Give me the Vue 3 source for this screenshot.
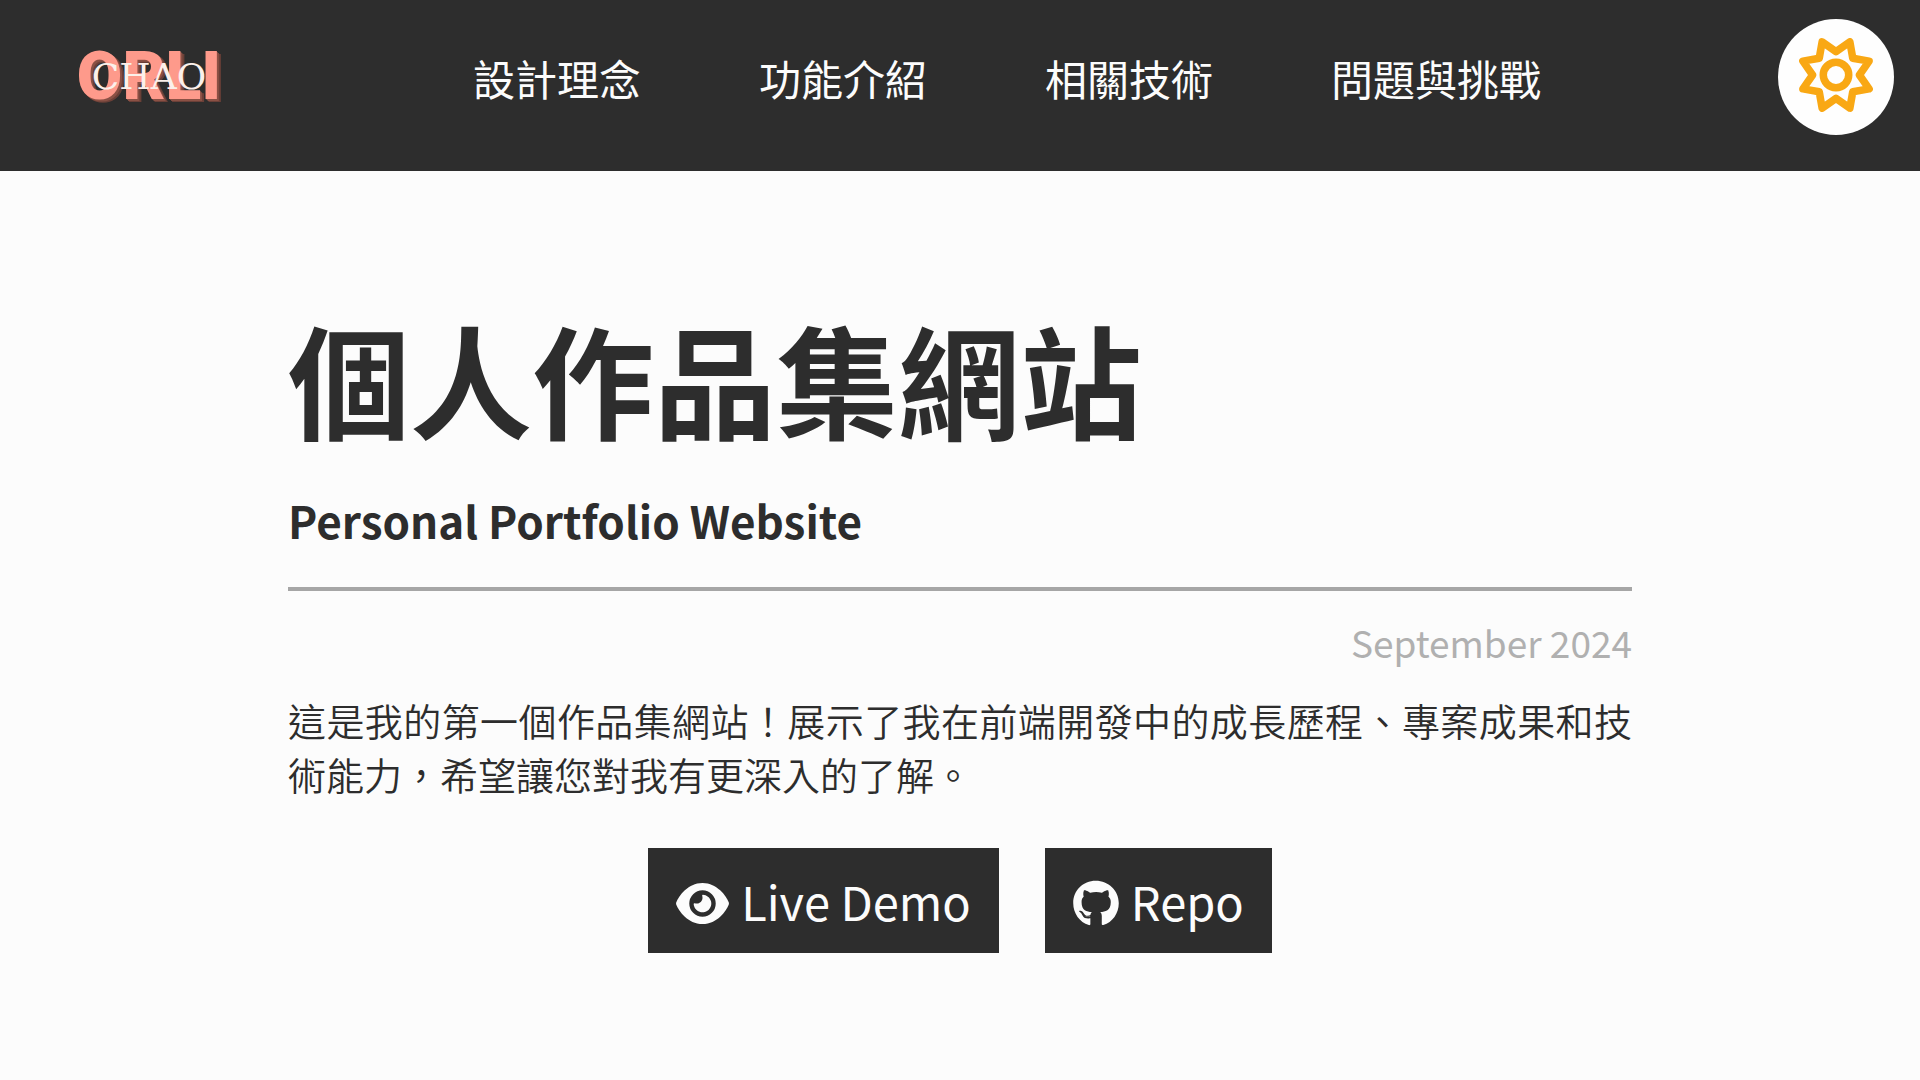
<script setup>
const links = [
  { id: 'concept', label: '設計理念' },
  { id: 'features', label: '功能介紹' },
  { id: 'tech', label: '相關技術' },
  { id: 'challenges', label: '問題與挑戰' },
]
</script>

<template>
  <div class="page">
    <header class="header">
      <a class="logo" href="#home">
        <span class="logo-name">ORLI</span>
        <span class="logo-family">CHAO</span>
      </a>
      <nav class="nav">
        <a v-for="link in links" :key="link.id" :href="'#' + link.id">{{ link.label }}</a>
      </nav>
      <button class="theme" type="button" aria-label="切換主題">
        <svg viewBox="0 0 512 512" aria-hidden="true">
          <path d="M256 94 352 27 372 140 485 160 418 256 485 352 372 372 352 485 256 418 160 485 140 372 27 352 94 256 27 160 140 140 160 27Z" />
          <circle cx="256" cy="256" r="88" />
        </svg>
      </button>
    </header>

    <main class="main">
      <h1>個人作品集網站</h1>
      <h2>Personal Portfolio Website</h2>
      <hr />
      <p class="date">September 2024</p>
      <p class="intro">這是我的第一個作品集網站！展示了我在前端開發中的成長歷程、專案成果和技術能力，希望讓您對我有更深入的了解。</p>
      <div class="actions">
        <a class="action" href="#demo">
          <svg class="eye" viewBox="0 0 576 512" aria-hidden="true">
            <path d="M288 32c-80.8 0-145.5 36.8-192.6 80.6C48.6 156 17.3 208 2.5 243.7c-3.3 7.9-3.3 16.7 0 24.6C17.3 304 48.6 356 95.4 399.4C142.5 443.2 207.2 480 288 480s145.5-36.8 192.6-80.6c46.8-43.5 78.1-95.4 93-131.1c3.3-7.9 3.3-16.7 0-24.6c-14.9-35.7-46.2-87.7-93-131.1C433.5 68.8 368.8 32 288 32zM144 256a144 144 0 1 1 288 0 144 144 0 1 1 -288 0zm144-64c0 35.3-28.7 64-64 64c-7.1 0-13.9-1.2-20.3-3.3c-5.5-1.8-11.9 1.6-11.7 7.4c.3 6.9 1.3 13.8 3.2 20.7c13.7 51.2 66.4 81.6 117.6 67.9s81.6-66.4 67.9-117.6c-11.1-41.5-47.8-69.4-88.6-71.1c-5.8-.2-9.2 6.1-7.4 11.7c2.1 6.4 3.3 13.2 3.3 20.3z" />
          </svg>
          Live Demo
        </a>
        <a class="action" href="#repo">
          <svg class="github" viewBox="0 0 496 512" aria-hidden="true">
            <path d="M165.9 397.4c0 2-2.3 3.6-5.2 3.6-3.3.3-5.6-1.3-5.6-3.6 0-2 2.3-3.6 5.2-3.6 3-.3 5.6 1.3 5.6 3.6zm-31.1-4.5c-.7 2 1.3 4.3 4.3 4.9 2.6 1 5.6 0 6.2-2s-1.3-4.3-4.3-5.2c-2.6-.7-5.5.3-6.2 2.3zm44.2-1.7c-2.9.7-4.9 2.6-4.6 4.9.3 2 2.9 3.3 5.9 2.6 2.9-.7 4.9-2.6 4.6-4.6-.3-1.9-3-3.2-5.9-2.9zM244.8 8C106.1 8 0 113.3 0 252c0 110.9 69.8 205.8 169.5 239.2 12.8 2.3 17.3-5.6 17.3-12.1 0-6.2-.3-40.4-.3-61.4 0 0-70 15-84.7-29.8 0 0-11.4-29.1-27.8-36.6 0 0-22.9-15.7 1.6-15.4 0 0 24.9 2 38.6 25.8 21.9 38.6 58.6 27.5 72.9 20.9 2.3-16 8.8-27.1 16-33.7-55.9-6.2-112.3-14.3-112.3-110.5 0-27.5 7.6-41.3 23.6-58.9-2.6-6.5-11.1-33.3 2.6-67.9 20.9-6.5 69 27 69 27 20-5.6 41.5-8.5 62.8-8.5s42.8 2.9 62.8 8.5c0 0 48.1-33.6 69-27 13.7 34.7 5.2 61.4 2.6 67.9 16 17.7 25.8 31.5 25.8 58.9 0 96.5-58.9 104.2-114.8 110.5 9.2 7.9 17 22.9 17 46.4 0 33.7-.3 75.4-.3 83.6 0 6.5 4.6 14.4 17.3 12.1C428.2 457.8 496 362.9 496 252 496 113.3 383.5 8 244.8 8z" />
          </svg>
          Repo
        </a>
      </div>
    </main>
  </div>
</template>

<style>
body {
  margin: 0;
  background: #fcfcfc;
}
</style>

<style scoped>
.page {
  min-height: 100vh;
  color: #2d2d2d;
  font-family: "Noto Sans CJK TC", "Noto Sans", sans-serif;
}

.header {
  display: flex;
  align-items: flex-start;
  justify-content: space-between;
  box-sizing: border-box;
  min-height: 171px;
  padding: 19px 26px 0 62px;
  background: #2d2d2d;
}

.logo {
  display: grid;
  place-items: center;
  width: 174px;
  height: 116px;
  text-decoration: none;
}

.logo-name,
.logo-family {
  grid-area: 1 / 1;
}

.logo-name {
  color: #fe9a8b;
  font: 900 66px/80px Roboto, "Liberation Sans", sans-serif;
  text-shadow: 1px 1px #8b5145, 2px 2px #8b5145, 3px 3px #6b4038, 4px 3px #6b4038;
}

.logo-family {
  color: #fbf0ea;
  font: 400 36px/40px "DejaVu Serif", serif;
}

.nav {
  display: flex;
  gap: 118px;
  padding-top: 29px;
}

.nav a {
  color: #fcfcfc;
  font-size: 42px;
  line-height: 60px;
  text-decoration: none;
  white-space: nowrap;
}

.theme {
  display: grid;
  place-items: center;
  box-sizing: border-box;
  width: 116px;
  height: 116px;
  padding: 0 0 4px;
  border: 0;
  border-radius: 50%;
  background: #fefefe;
  cursor: pointer;
}

.theme svg {
  width: 74px;
  height: 74px;
  fill: none;
  stroke: #f9a814;
  stroke-width: 52;
  stroke-linejoin: round;
}

.main {
  width: 70%;
  margin: 0 auto;
  padding: 132px 0 96px;
}

h1 {
  margin: 0;
  font-size: 122px;
  line-height: 148px;
  font-weight: 700;
}

h2 {
  margin: 35px 0 0;
  font-size: 44px;
  line-height: 68px;
  font-weight: 700;
}

hr {
  height: 4px;
  margin: 33px 0 24px;
  border: 0;
  background: #a6a6a6;
}

.date {
  margin: 0;
  color: #b0b0b0;
  font-size: 37px;
  line-height: 54px;
  text-align: right;
}

.intro {
  margin: 24px 0 0;
  font-size: 38px;
  line-height: 54px;
  font-weight: 350;
  text-align: justify;
}

.actions {
  display: flex;
  justify-content: center;
  gap: 46px;
  margin-top: 47px;
}

.action {
  display: flex;
  align-items: center;
  gap: 12px;
  padding: 16px 28px;
  background: #2d2d2d;
  color: #fcfcfc;
  font-size: 47px;
  line-height: 73px;
  text-decoration: none;
}

.action svg {
  height: 47px;
  margin-top: 6px;
  fill: currentColor;
}

.eye {
  width: 53px;
}

.github {
  width: 46px;
}
</style>
